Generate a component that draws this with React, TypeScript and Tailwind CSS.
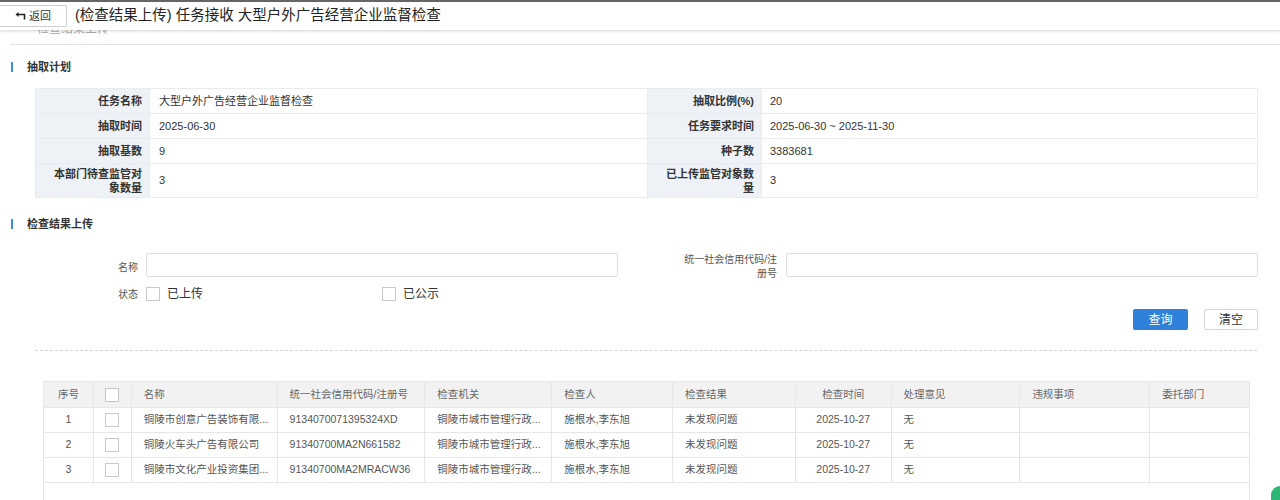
import React from "react";

const font = { fontFamily: '"Liberation Sans", "Noto Sans CJK SC", sans-serif' };

function SectionTitle({ title }: { title: string }) {
  return (
    <div className="flex items-center h-[20px] pl-[11px]">
      <div className="w-[2px] h-[10px] bg-[#3b8fe0]" />
      <span className="ml-[14px] text-[11px] font-bold text-[#333]">{title}</span>
    </div>
  );
}

function InfoRow({ l1, v1, l2, v2, tall }: { l1: React.ReactNode; v1: string; l2: React.ReactNode; v2: string; tall?: boolean }) {
  const h = tall ? "h-[33px]" : "h-[25px]";
  return (
    <div className={`flex ${h} border-b border-[#e9ecef] last:border-b-0`}>
      <div className="w-[113px] bg-[#eef1f5] flex items-center justify-end pr-[7px] text-right text-[11px] font-bold text-[#333] leading-[14px]">{l1}</div>
      <div className="w-[499px] flex items-center pl-[9px] text-[11px] text-[#333] border-l border-r border-[#e9ecef]">{v1}</div>
      <div className="w-[113px] bg-[#eef1f5] flex items-center justify-end pr-[7px] text-right text-[11px] font-bold text-[#333] leading-[14px]">{l2}</div>
      <div className="flex-1 flex items-center pl-[8px] text-[11px] text-[#333] border-l border-[#e9ecef]">{v2}</div>
    </div>
  );
}

function Box() {
  return <div className="w-[14px] h-[14px] border border-[#c9c9c9] bg-white" />;
}

function BackIcon() {
  return (
    <svg width="11" height="8" viewBox="0 0 11 8" className="mr-[3px]">
      <path d="M0.5 2.5 L3.5 0 L3.5 5 Z" fill="#222" />
      <path d="M3 2.5 H9.5 V7.5" stroke="#222" strokeWidth="1.6" fill="none" />
    </svg>
  );
}

const cols = [50, 38, 146, 148, 127, 121, 123, 96, 129, 130, 99];

const rows = [
  ["1", "铜陵市创意广告装饰有限...", "9134070071395324XD"],
  ["2", "铜陵火车头广告有限公司", "91340700MA2N661582"],
  ["3", "铜陵市文化产业投资集团...", "91340700MA2MRACW36"],
];

export default function App() {
  const headers = ["序号", "", "名称", "统一社会信用代码/注册号", "检查机关", "检查人", "检查结果", "检查时间", "处理意见", "违规事项", "委托部门"];
  return (
    <div className="w-[1280px] h-[500px] overflow-hidden bg-white relative" style={font}>
      {/* header bar */}
      <div className="h-[30px] border-t-2 border-[#666] flex items-center shadow-[0_1px_3px_rgba(0,0,0,0.18)] relative z-10 bg-white">
        <div className="h-[22px] w-[67px] border border-[#cfcfcf] border-l-0 rounded-r-[2px] flex items-center justify-center text-[11px] text-[#333]">
          <BackIcon />返回
        </div>
        <span className="ml-[8px] text-[14.5px] text-[#222]">(检查结果上传) 任务接收 大型户外广告经营企业监督检查</span>
      </div>
      <div className="h-[14px] overflow-hidden">
        <div className="-mt-[10px] ml-[37px] text-[12px] text-[#aaa]">检查结果上传</div>
      </div>
      <div className="ml-[10px] border-t border-[#e3e3e3]" />

      <div className="pt-[12px]">
        <SectionTitle title="抽取计划" />
      </div>

      <div className="ml-[35px] mr-[22px] mt-[11px] border border-[#e9ecef]">
        <InfoRow l1="任务名称" v1="大型户外广告经营企业监督检查" l2="抽取比例(%)" v2="20" />
        <InfoRow l1="抽取时间" v1="2025-06-30" l2="任务要求时间" v2="2025-06-30 ~ 2025-11-30" />
        <InfoRow l1="抽取基数" v1="9" l2="种子数" v2="3383681" />
        <InfoRow tall l1={<span>本部门待查监管对<br />象数量</span>} v1="3" l2={<span>已上传监管对象数<br />量</span>} v2="3" />
      </div>

      <div className="pt-[16px]">
        <SectionTitle title="检查结果上传" />
      </div>

      {/* form */}
      <div className="mt-[19px] flex">
        <div className="w-[138px] flex items-center justify-end text-[10px] text-[#555]">名称</div>
        <div className="ml-[8px] w-[472px] h-[24px] border border-[#dedede] rounded-[2px]" />
        <div className="w-[159px] flex items-center justify-end text-right text-[10px] text-[#555] leading-[14px]">统一社会信用代码/注<br />册号</div>
        <div className="ml-[9px] w-[472px] h-[24px] border border-[#dedede] rounded-[2px]" />
      </div>
      <div className="mt-[5px] flex items-center h-[16px]">
        <div className="w-[138px] text-right text-[10px] text-[#555]">状态</div>
        <div className="ml-[8px]"><Box /></div>
        <span className="ml-[7px] text-[12px] text-[#333]">已上传</span>
        <div className="ml-[179px]"><Box /></div>
        <span className="ml-[7px] text-[12px] text-[#333]">已公示</span>
      </div>

      <div className="mt-[7px] flex justify-end pr-[22px] gap-[16px]">
        <div className="w-[55px] h-[21px] bg-[#2f80d9] rounded-[2px] flex items-center justify-center text-[12px] text-white">查询</div>
        <div className="w-[54px] h-[21px] border border-[#d4d4d4] rounded-[2px] flex items-center justify-center text-[12px] text-[#333]">清空</div>
      </div>

      <div className="mt-[20px] ml-[35px] mr-[23px] border-t border-dashed border-[#cfd4da]" />

      {/* table */}
      <div className="mt-[30px] ml-[43px] w-[1207px] border border-[#e6e6e6] border-b-0 h-[120px]">
        <div className="flex h-[26px] bg-[#f2f2f2] border-b border-[#e6e6e6]">
          {headers.map((h, i) => (
            <div
              key={i}
              style={{ width: cols[i] }}
              className={`flex items-center text-[10.5px] text-[#666] ${i < 10 ? "border-r border-[#e6e6e6]" : ""} ${i === 0 || i === 1 || i === 7 ? "justify-center" : "pl-[12px]"}`}
            >
              {i === 1 ? <Box /> : h}
            </div>
          ))}
        </div>
        {rows.map((r) => {
          const cells = [r[0], "", r[1], r[2], "铜陵市城市管理行政...", "施根水,李东旭", "未发现问题", "2025-10-27", "无", "", ""];
          return (
            <div key={r[0]} className="flex h-[25px] border-b border-[#e6e6e6]">
              {cells.map((c, i) => (
                <div
                  key={i}
                  style={{ width: cols[i] }}
                  className={`flex items-center text-[10.5px] text-[#555] whitespace-nowrap overflow-hidden ${i < 10 ? "border-r border-[#e6e6e6]" : ""} ${i === 0 || i === 1 || i === 7 ? "justify-center" : "pl-[12px]"}`}
                >
                  {i === 1 ? <Box /> : c}
                </div>
              ))}
            </div>
          );
        })}
      </div>

      {/* floating widget corner */}
      <div className="absolute right-0 bottom-0 w-[9px] h-[14px] bg-[#2bb673] rounded-tl-[9px]" />
    </div>
  );
}
